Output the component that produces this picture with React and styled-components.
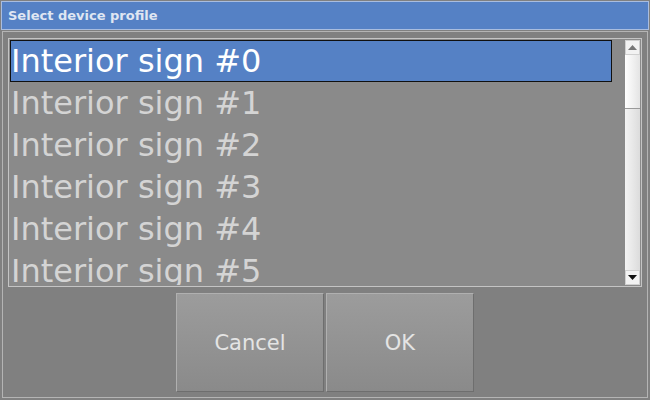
import styled, { createGlobalStyle } from "styled-components";

const GlobalStyle = createGlobalStyle`
  html, body {
    margin: 0;
    padding: 0;
    background: #808080;
    font-family: "DejaVu Sans", Verdana, sans-serif;
    overflow: hidden;
  }
`;

const Window = styled.div`
  width: 650px;
  height: 400px;
  display: flex;
  flex-direction: column;
  box-sizing: border-box;
  background: #808080;
`;

const TitleBar = styled.div`
  height: 29px;
  flex: none;
  box-sizing: border-box;
  margin: 1px 1px 0 1px;
  background: #5581c5;
  border: 1px solid #a9bddf;
  display: flex;
  align-items: center;
  padding-left: 6px;
  color: #dfe6f2;
  font-size: 13px;
  font-weight: bold;
`;

const Frame = styled.div`
  flex: 1;
  margin: 1px 2px 2px 2px;
  border: 1px solid #b4b4b4;
  display: flex;
  flex-direction: column;
  padding: 6px 5px 0 5px;
  gap: 6px;
`;

const ListBox = styled.div`
  height: 249px;
  flex: none;
  box-sizing: border-box;
  border: 1px solid #c4c4c4;
  background: #8a8a8a;
  display: flex;
  padding: 1px;
  gap: 13px;
  overflow: hidden;
`;

const Rows = styled.div`
  flex: 1;
  display: flex;
  flex-direction: column;
  overflow: hidden;
`;

const Row = styled.div`
  height: 42px;
  flex: none;
  box-sizing: border-box;
  display: flex;
  align-items: center;
  padding-left: 0;
  font-size: 32px;
  color: ${(props) => (props.selected ? "#ffffff" : "#d4d4d4")};
  background: ${(props) => (props.selected ? "#5581c5" : "transparent")};
  border: 1px solid ${(props) => (props.selected ? "#101010" : "transparent")};
  white-space: nowrap;
`;

const ScrollBar = styled.div`
  width: 15px;
  flex: none;
  display: flex;
  flex-direction: column;
  background: linear-gradient(to right, #f4f4f4, #dcdcdc);
`;

const ArrowButton = styled.div`
  height: 15px;
  flex: none;
  box-sizing: border-box;
  background: #f2f2f2;
  border: 1px solid #d0d0d0;
  display: flex;
  align-items: center;
  justify-content: center;
`;

const Thumb = styled.div`
  height: 54px;
  flex: none;
  box-sizing: border-box;
  background: linear-gradient(to right, #ffffff, #e4e4e4);
  border-bottom: 1px solid #9a9a9a;
`;

const Track = styled.div`
  flex: 1;
`;

const ButtonRow = styled.div`
  display: flex;
  justify-content: center;
  gap: 2px;
`;

const Button = styled.div`
  width: 148px;
  height: 99px;
  box-sizing: border-box;
  border: 1px solid #6e6e6e;
  border-top-color: #b0b0b0;
  border-left-color: #b0b0b0;
  background: linear-gradient(to bottom, #9c9c9c, #8a8a8a);
  display: flex;
  align-items: center;
  justify-content: center;
  color: #e4e4e4;
  font-size: 21px;
`;

function Arrow({ down }) {
  return (
    <svg width="9" height="5" viewBox="0 0 9 5">
      <path
        d={down ? "M0 0 L9 0 L4.5 5 Z" : "M0 5 L9 5 L4.5 0 Z"}
        fill={down ? "#111" : "#777"}
      />
    </svg>
  );
}

const items = [0, 1, 2, 3, 4, 5];

export default function App() {
  return (
    <Window>
      <GlobalStyle />
      <TitleBar>Select device profile</TitleBar>
      <Frame>
        <ListBox>
          <Rows>
            {items.map((n) => (
              <Row key={n} selected={n === 0}>
                Interior sign #{n}
              </Row>
            ))}
          </Rows>
          <ScrollBar>
            <ArrowButton>
              <Arrow />
            </ArrowButton>
            <Thumb />
            <Track />
            <ArrowButton>
              <Arrow down />
            </ArrowButton>
          </ScrollBar>
        </ListBox>
        <ButtonRow>
          <Button>Cancel</Button>
          <Button>OK</Button>
        </ButtonRow>
      </Frame>
    </Window>
  );
}
